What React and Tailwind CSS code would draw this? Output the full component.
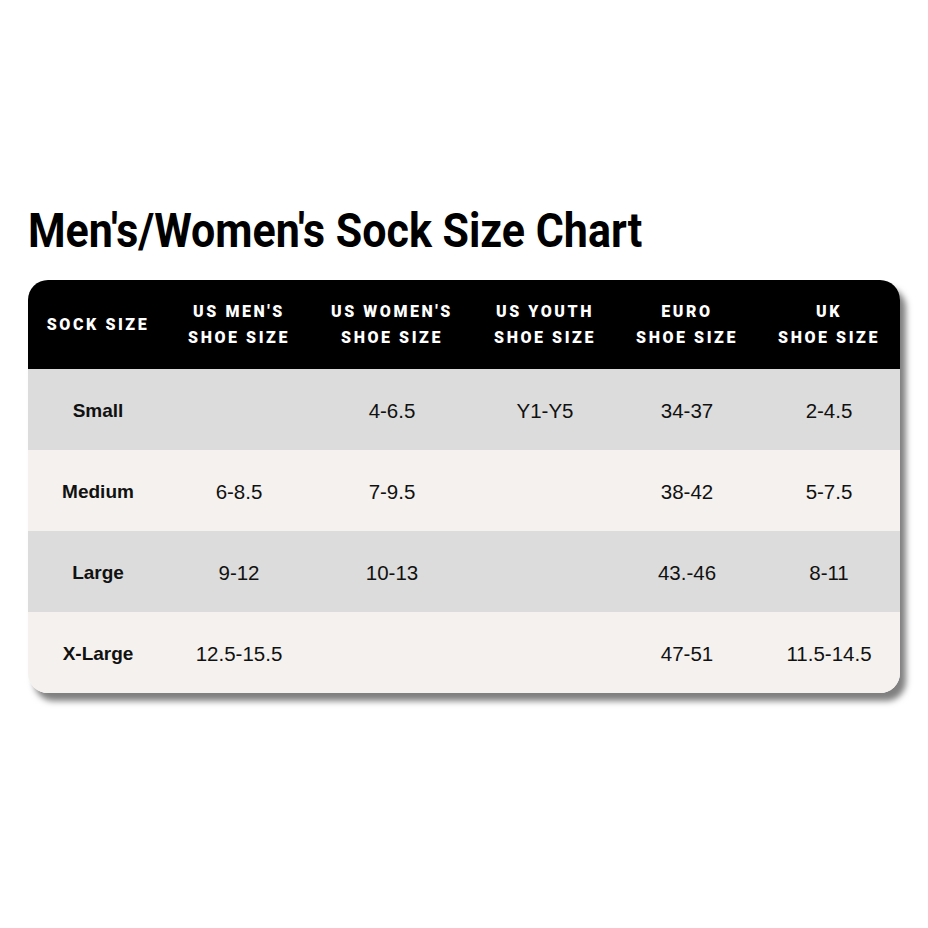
import React from 'react';

const headers = [
    ['SOCK SIZE'],
    ['US MEN\'S', 'SHOE SIZE'],
    ['US WOMEN\'S', 'SHOE SIZE'],
    ['US YOUTH', 'SHOE SIZE'],
    ['EURO', 'SHOE SIZE'],
    ['UK', 'SHOE SIZE'],
];

const rows = [
    ['Small', '', '4-6.5', 'Y1-Y5', '34-37', '2-4.5'],
    ['Medium', '6-8.5', '7-9.5', '', '38-42', '5-7.5'],
    ['Large', '9-12', '10-13', '', '43.-46', '8-11'],
    ['X-Large', '12.5-15.5', '', '', '47-51', '11.5-14.5'],
];

const cols = 'grid grid-cols-[140px_142px_164px_142px_142px_142px]';

export default function App() {
    return (
        <div className="w-[928px] h-[928px] bg-white pt-[203px] pl-[28px]">
            <h1 className="font-['Roboto',sans-serif] font-bold text-[48px] leading-[56px] text-black inline-block origin-left scale-x-[0.895] whitespace-nowrap">
                Men's/Women's Sock Size Chart
            </h1>
            <div className="mt-[21px] w-[872px] rounded-[20px] overflow-hidden shadow-[6px_8px_6px_rgba(0,0,0,0.5)]">
                <div className={`${cols} bg-black h-[89px] items-center`}>
                    {headers.map((h, i) => (
                        <div key={i} className="text-center text-white font-['Roboto',sans-serif] font-black text-[16px] leading-[26px] tracking-[0.16em]">
                            {h.map((l, j) => <div key={j}>{l}</div>)}
                        </div>
                    ))}
                </div>
                {rows.map((r, i) => (
                    <div key={i} className={`${cols} h-[81px] items-center pt-[3px] ${i % 2 === 0 ? 'bg-[#dcdcdc]' : 'bg-[#f4f1ee]'}`}>
                        {r.map((c, j) => (
                            <div key={j} className={`text-center text-[#111] font-['Liberation_Sans',sans-serif] ${j === 0 ? 'font-bold text-[19px]' : 'text-[20.5px]'}`}>
                                {c}
                            </div>
                        ))}
                    </div>
                ))}
            </div>
        </div>
    );
}
